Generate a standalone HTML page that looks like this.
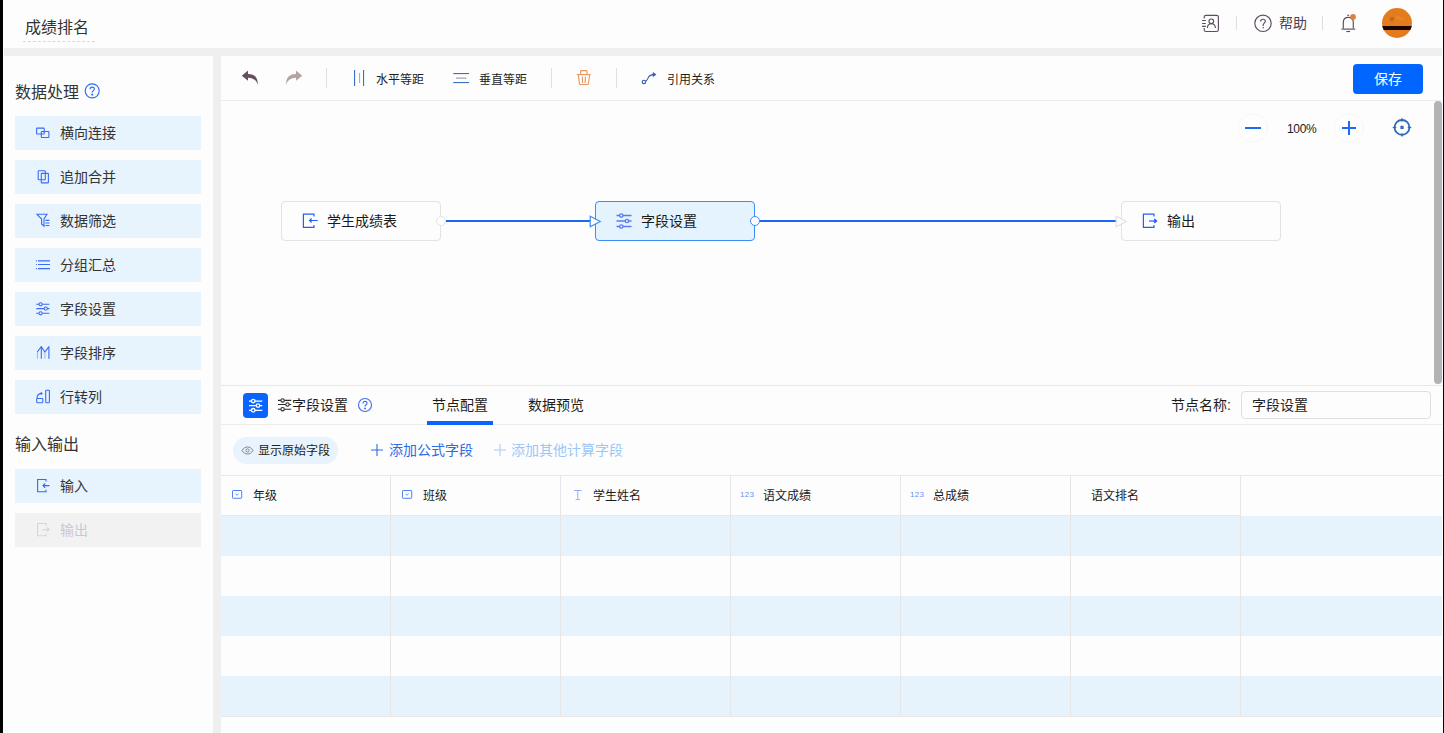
<!DOCTYPE html>
<html lang="zh-CN">
<head>
<meta charset="utf-8">
<style>
*{box-sizing:border-box;margin:0;padding:0}
html,body{width:1444px;height:733px;overflow:hidden;background:#fdfdfd;font-family:"Liberation Sans",sans-serif;color:#333}
.abs{position:absolute}
#lb{left:0;top:0;width:3px;height:733px;background:#000}
#rb{left:1443px;top:0;width:1px;height:733px;background:#000}
#lw{left:3px;top:0;width:1px;height:733px;background:#fff}
#rw{left:1442px;top:0;width:1px;height:733px;background:#fff}
#gray{left:4px;top:48px;width:1438px;height:685px;background:#efefef}
#title{left:25px;top:17px;font-size:16px;line-height:22px;color:#333}
#title-ul{left:23px;top:41px;width:72px;height:1px;border-top:1px dashed #d9d9d9}
.hsep{width:1px;height:14px;background:#ddd}
#left{left:4px;top:56px;width:209px;height:677px;background:#fdfdfd}
.sec{position:absolute;left:15px;font-size:16px;line-height:20px;color:#333;margin-top:2px}
.item{position:absolute;left:15px;width:186px;height:34px;background:#e7f3fd;font-size:14px;line-height:34px;color:#333}
.item .t{position:absolute;left:45px;top:0}
.item svg{position:absolute;left:21px;top:10px}
.item.dis{background:#f2f2f2;color:#c8c8d8}
#main{left:221px;top:56px;width:1221px;height:677px;background:#fdfdfd}
.tb{position:absolute;font-size:12px;line-height:16px;color:#1d1d1d}
.node-t{font-size:14px;line-height:18px;color:#1a1a1a}
.th{top:488px;font-size:12px;line-height:16px;color:#1a1a1a}
.num{top:490px;font-size:8px;line-height:10px;color:#6d8ef5;letter-spacing:0.3px}
.vsep{position:absolute;width:1px;height:20px;background:#e0e0e0}
</style>
</head>
<body>
<div id="lb" class="abs"></div>
<div id="rb" class="abs"></div>
<div id="lw" class="abs"></div>
<div id="rw" class="abs"></div>
<div id="gray" class="abs"></div>

<!-- header -->
<div id="title" class="abs">成绩排名</div>
<div id="title-ul" class="abs"></div>


<!-- header right -->
<svg class="abs" style="left:1198px;top:10px" width="26" height="26" viewBox="0 0 26 26" fill="none" stroke="#5b4d63" stroke-width="1.15">
<path d="M6.2 8.6V7.1C6.2 6.1 7 5.3 8 5.3H18.6C19.6 5.3 20.4 6.1 20.4 7.1V19.7C20.4 20.7 19.6 21.5 18.6 21.5H8C7 21.5 6.2 20.7 6.2 19.7V18"/>
<path d="M4.1 10.5H7.8M4.1 13.5H7.8M4.1 16.3H7.8"/>
<circle cx="13.3" cy="11.3" r="2.3"/>
<path d="M9.4 18C9.4 15.6 11.1 13.8 13.4 13.8 15.7 13.8 17.4 15.6 17.4 18"/>
</svg>
<div class="abs hsep" style="left:1236px;top:16px"></div>
<svg class="abs" style="left:1250px;top:10px" width="26" height="26" viewBox="0 0 26 26" fill="none" stroke="#5b4d63" stroke-width="1.15">
<circle cx="13" cy="13.3" r="8.2"/>
<path d="M10.6 11.4C10.6 9.9 11.6 9.2 13 9.2 14.4 9.2 15.3 10 15.3 11.2 15.3 12.7 13.2 13.1 13.2 15.3V15.9"/>
<path d="M12.6 17.6H13.9" stroke-width="1.3"/>
</svg>
<div class="abs" style="left:1279px;top:14px;font-size:14px;line-height:18px;color:#4b4052">帮助</div>
<div class="abs hsep" style="left:1322px;top:16px"></div>
<svg class="abs" style="left:1336px;top:10px" width="26" height="26" viewBox="0 0 26 26" fill="none" stroke="#5b4d63" stroke-width="1.15">
<path d="M7.3 18.6V12.4C7.3 9.3 9.3 7.3 12.3 7.3 15.3 7.3 17.3 9.3 17.3 12.4V18.6"/>
<path d="M5.4 19.1H19.2"/>
<path d="M11.3 5.3H13.1"/>
<path d="M10.4 21.5H14.1"/>
<circle cx="17" cy="6.9" r="2.9" fill="#d8843e" stroke="none"/>
</svg>
<svg class="abs" style="left:1382px;top:8px" width="30" height="30" viewBox="0 0 30 30">
<defs><clipPath id="av"><circle cx="15" cy="15" r="15"/></clipPath></defs>
<g clip-path="url(#av)">
<rect width="30" height="30" fill="#e47c1d"/>
<path d="M14 7.5c3 0.5 6 2.5 9 4.5-3 0.5-6 0-9-1.5z" fill="#ea8a33" opacity="0.8"/>
<path d="M8.8 9.2v4.3M11.1 9.2v4.3M8.8 9.6l1.15 2 1.15-2" stroke="#9a5a1f" stroke-width="0.7" fill="none"/>
<rect x="0" y="18" width="30" height="4" fill="#1a0505"/>
</g>
</svg>

<!-- left panel -->
<div id="left" class="abs"></div>
<div class="sec" style="top:81px">数据处理</div>
<div class="item" style="top:116px"><span class="t">横向连接</span></div>
<div class="item" style="top:160px"><span class="t">追加合并</span></div>
<div class="item" style="top:204px"><span class="t">数据筛选</span></div>
<div class="item" style="top:248px"><span class="t">分组汇总</span></div>
<div class="item" style="top:292px"><span class="t">字段设置</span></div>
<div class="item" style="top:336px"><span class="t">字段排序</span></div>
<div class="item" style="top:380px"><span class="t">行转列</span></div>
<div class="sec" style="top:433px">输入输出</div>
<div class="item" style="top:469px"><span class="t">输入</span></div>
<div class="item dis" style="top:513px"><span class="t">输出</span></div>


<!-- left icons -->
<svg class="abs" style="left:83px;top:82px" width="18" height="18" viewBox="0 0 18 18" fill="none" stroke="#2a6cf5" stroke-width="1.1">
<circle cx="9.2" cy="8.9" r="7"/>
<path d="M7 7.2c0-1.3 0.9-2.1 2.2-2.1s2.2 0.8 2.2 2c0 1.6-2.2 1.6-2.2 3.4"/>
<circle cx="9.2" cy="12.6" r="0.5" fill="#2a6cf5"/>
</svg>
<svg class="abs ic" style="left:34px;top:125px" width="18" height="16" viewBox="0 0 18 16" fill="none" stroke="#3a6cf5" stroke-width="1.1">
<rect x="2.6" y="3.1" width="7.6" height="5.9" rx="0.5"/>
<rect x="7.3" y="6.5" width="7.6" height="6" rx="0.5"/>
</svg>
<svg class="abs ic" style="left:34px;top:168px" width="18" height="18" viewBox="0 0 18 18" fill="none" stroke="#3a6cf5" stroke-width="1.1">
<rect x="4.2" y="2.7" width="7.1" height="9" rx="0.5"/>
<rect x="7.3" y="5.4" width="7.1" height="9.5" rx="0.5"/>
</svg>
<svg class="abs ic" style="left:34px;top:212px" width="18" height="17" viewBox="0 0 18 17" fill="none" stroke="#3a6cf5" stroke-width="1.1">
<path d="M3 2.3h10l-3 4.6v7.3l-2.4-2.3V7z"/>
<path d="M11.4 8.4h4M11.4 11h4M11.4 13.5h4"/>
</svg>
<svg class="abs ic" style="left:34px;top:256px" width="18" height="17" viewBox="0 0 18 17" fill="none" stroke="#3a6cf5" stroke-width="1.1">
<path d="M4 4.9h12M4 8.5h12M4 12.6h12"/>
<path d="M2 4.9h0.9M2 8.5h0.9M2 12.6h0.9"/>
</svg>
<svg class="abs ic" style="left:34px;top:300px" width="18" height="17" viewBox="0 0 18 17" fill="none" stroke="#3a6cf5" stroke-width="1.1">
<path d="M2.3 4.3h2.6M8.3 4.3h7.1M2.3 8.6h7.8M13.5 8.6h1.9M2.3 13.3h2.6M8.3 13.3h7.1"/>
<circle cx="6.6" cy="4.3" r="1.6"/><circle cx="11.8" cy="8.6" r="1.6"/><circle cx="6.6" cy="13.3" r="1.6"/>
</svg>
<svg class="abs ic" style="left:34px;top:343px" width="18" height="17" viewBox="0 0 18 17" fill="none" stroke="#3a6cf5" stroke-width="1.1">
<path d="M3.2 9l4.1-5.4L10.9 9l4-5.4"/>
<path d="M7.3 3.6v12.2M14.9 3.6v12.2"/>
<path d="M3.5 9v6.8M10.9 9v6.8" stroke="#a3b8f5"/>
</svg>
<svg class="abs ic" style="left:34px;top:388px" width="18" height="17" viewBox="0 0 18 17" fill="none" stroke="#3a6cf5" stroke-width="1.1">
<rect x="2.7" y="10.5" width="6.1" height="4.2" rx="0.6"/>
<path d="M3 10.2c0-3 1.8-4.6 4.6-4.8"/>
<path d="M6.8 4.3l1.3 1.1-1.3 1.1"/>
<rect x="11.7" y="2.3" width="3.7" height="12.4" rx="0.6"/>
</svg>
<svg class="abs ic" style="left:34px;top:477px" width="18" height="17" viewBox="0 0 18 17" fill="none" stroke="#2f6cf2" stroke-width="1.1">
<path d="M12 4.5V2.5H3.6v12.3H12v-2"/>
<path d="M15.5 8.6H9M11.2 6.4L9 8.6l2.2 2.2"/>
</svg>
<svg class="abs ic" style="left:34px;top:521px" width="18" height="17" viewBox="0 0 18 17" fill="none" stroke="#d3d3ea" stroke-width="1.1">
<path d="M12 4.5V2.5H3.6v12.3H12v-2"/>
<path d="M8.6 8.6h6.5M12.9 6.4l2.2 2.2-2.2 2.2"/>
</svg>

<!-- main panel -->
<div id="main" class="abs"></div>

<!-- toolbar -->
<div class="abs" style="left:221px;top:100px;width:1221px;height:1px;background:#ebebeb"></div>
<svg class="abs" style="left:240px;top:68px" width="20" height="20" viewBox="0 0 20 20">
<path d="M1.8 7.7L8 2.6V5.9C14 5.9 18.2 9 17.8 17 16.8 12.6 13.4 9.7 8 9.7V12.8Z" fill="#654e60"/>
</svg>
<svg class="abs" style="left:284px;top:68px" width="20" height="20" viewBox="0 0 20 20">
<path d="M18.2 7.7L12 2.6V5.9C6 5.9 1.8 9 2.2 17 3.2 12.6 6.6 9.7 12 9.7V12.8Z" fill="#b3a49f"/>
</svg>
<div class="vsep" style="left:326px;top:68px"></div>
<svg class="abs" style="left:352px;top:69px" width="14" height="18" viewBox="0 0 14 18">
<rect x="2" y="1" width="1.1" height="16" fill="#3a6fc0"/>
<rect x="7" y="4" width="1.1" height="10" fill="#a6aec4"/>
<rect x="11" y="1" width="1.1" height="16" fill="#3a6fc0"/>
</svg>
<div class="tb" style="left:376px;top:72px">水平等距</div>
<svg class="abs" style="left:452px;top:71px" width="18" height="14" viewBox="0 0 18 14">
<rect x="1.2" y="2" width="15.8" height="1.1" fill="#3a6fc0"/>
<rect x="4" y="6.5" width="10.4" height="1.3" fill="#a6a6b6"/>
<rect x="1.2" y="11" width="15.8" height="1.1" fill="#3a6fc0"/>
</svg>
<div class="tb" style="left:479px;top:72px">垂直等距</div>
<div class="vsep" style="left:551px;top:68px"></div>
<svg class="abs" style="left:570px;top:64px" width="28" height="28" viewBox="0 0 28 28" fill="none" stroke="#e8955c" stroke-width="1.1">
<path d="M6.9 10.6H20.8"/>
<path d="M10.6 10.4V7.3C10.6 6.9 10.9 6.6 11.3 6.6H16.3C16.7 6.6 17 6.9 17 7.3V10.4"/>
<path d="M8.3 10.7L9.5 19.8C9.6 20.2 9.9 20.5 10.3 20.5H17.6C18 20.5 18.3 20.2 18.4 19.8L19.6 10.7"/>
<path d="M12.3 12.6L12.6 19M15.5 12.6L15.2 19"/>
</svg>
<div class="vsep" style="left:616px;top:68px"></div>
<svg class="abs" style="left:636px;top:66px" width="26" height="24" viewBox="0 0 26 24" fill="none" stroke="#2f5cae" stroke-width="1.1">
<circle cx="7.9" cy="15.9" r="1.7"/>
<path d="M9.5 15.2C11.6 14.6 11.8 11.6 13.4 10 14.4 9 15.6 8.7 17.2 8.6"/>
<path d="M17 6.6l3.1 2-3.1 2z" fill="#2f5cae" stroke-width="0.6"/>
</svg>
<div class="tb" style="left:667px;top:72px">引用关系</div>
<div class="abs" style="left:1353px;top:64px;width:70px;height:30px;background:#0066ff;border-radius:4px;color:#fff;font-size:14px;line-height:30px;text-align:center">保存</div>

<!-- canvas controls -->
<div class="abs" style="left:1238px;top:113px;width:30px;height:30px;border:1px solid #f7f7f7;border-radius:50%"></div>
<div class="abs" style="left:1245px;top:127px;width:16px;height:2px;background:#1f6af5"></div>
<div class="abs" style="left:1287px;top:121px;font-size:12px;line-height:16px;color:#1a1a1a;letter-spacing:-0.3px">100%</div>
<div class="abs" style="left:1334px;top:113px;width:30px;height:30px;border:1px solid #f7f7f7;border-radius:50%"></div>
<div class="abs" style="left:1342px;top:127px;width:14px;height:2px;background:#1f6af5"></div>
<div class="abs" style="left:1348px;top:121px;width:2px;height:14px;background:#1f6af5"></div>
<svg class="abs" style="left:1391px;top:116px" width="22" height="22" viewBox="0 0 22 22" fill="none" stroke="#2f6bbd" stroke-width="1.8">
<circle cx="11" cy="11.4" r="7.4"/>
<rect x="9.4" y="9.8" width="3.2" height="3.2" fill="#2f6bbd" stroke="none"/>
<path d="M11 1.6L12.3 4.2 11 6 9.7 4.2z M11 21.2L12.3 18.6 11 16.8 9.7 18.6z M1.2 11.4L3.8 10.1 5.6 11.4 3.8 12.7z M20.8 11.4L18.2 10.1 16.4 11.4 18.2 12.7z" fill="#2f6bbd" stroke="none"/>
</svg>
<div class="abs" style="left:1434px;top:101px;width:8px;height:283px;background:#b4b2b4;border-radius:4px"></div>

<!-- nodes -->
<div class="abs" style="left:446px;top:220px;width:146px;height:2px;background:#1b66f5"></div>
<div class="abs" style="left:759px;top:220px;width:358px;height:2px;background:#1b66f5"></div>
<div class="abs" style="left:281px;top:201px;width:160px;height:40px;border:1px solid #e3e3e3;border-radius:4px;background:#fdfdfd"></div>
<svg class="abs" style="left:298px;top:209px" width="24" height="24" viewBox="0 0 24 24" fill="none" stroke="#1f60fa" stroke-width="1.2">
<path d="M16 7.6V5.2H5.4v13.2H16v-2.4"/>
<path d="M19.8 11.5H11.6M13.6 9.5l-2 2 2 2"/>
</svg>
<div class="abs node-t" style="left:327px;top:212px">学生成绩表</div>
<div class="abs" style="left:436px;top:216px;width:10px;height:10px;border:1px solid #e3e3e3;border-radius:50%;background:#fff"></div>

<div class="abs" style="left:595px;top:201px;width:160px;height:40px;border:1px solid #3a8ef5;border-radius:4px;background:#e4f3fd"></div>
<svg class="abs" style="left:589px;top:215px" width="13" height="13" viewBox="0 0 13 13">
<path d="M1.2 1.2L11.2 6.5 1.2 11.8z" fill="#fff" stroke="#3a8ef5" stroke-width="1.2"/>
</svg>
<svg class="abs" style="left:615px;top:212px" width="18" height="18" viewBox="0 0 18 18" fill="none" stroke="#5a7cf0" stroke-width="1.3">
<path d="M1.5 3.5h3M8 3.5h8.5M1.5 9h8.8M13.7 9h2.8M1.5 14.5h3M8 14.5h8.5"/>
<circle cx="6.3" cy="3.5" r="1.7"/><circle cx="12" cy="9" r="1.7"/><circle cx="6.3" cy="14.5" r="1.7"/>
</svg>
<div class="abs node-t" style="left:641px;top:212px">字段设置</div>
<div class="abs" style="left:750px;top:216px;width:10px;height:10px;border:1px solid #3a8ef5;border-radius:50%;background:#fff"></div>

<div class="abs" style="left:1121px;top:201px;width:160px;height:40px;border:1px solid #e3e3e3;border-radius:4px;background:#fdfdfd"></div>
<svg class="abs" style="left:1115px;top:215px" width="13" height="13" viewBox="0 0 13 13">
<path d="M1.2 1.2L11.2 6.5 1.2 11.8z" fill="#fff" stroke="#e0e0e0" stroke-width="1.2"/>
</svg>
<svg class="abs" style="left:1138px;top:209px" width="24" height="24" viewBox="0 0 24 24" fill="none" stroke="#1f60fa" stroke-width="1.2">
<path d="M16 7.6V5.2H5.4v13.2H16v-2.4"/>
<path d="M11 12H17.5"/>
<path d="M16.6 9.9l2.6 2.1-2.6 2.1z" fill="#1f60fa" stroke-width="0.8"/>
</svg>
<div class="abs node-t" style="left:1167px;top:212px">输出</div>



<!-- bottom panel -->
<div class="abs" style="left:221px;top:385px;width:1221px;height:1px;background:#e8e8e8"></div>
<div class="abs" style="left:221px;top:424px;width:1221px;height:1px;background:#ebebeb"></div>
<div class="abs" style="left:243px;top:393px;width:25px;height:25px;background:#0a64ff;border-radius:4px"></div>
<svg class="abs" style="left:246px;top:396px" width="19" height="19" viewBox="0 0 19 19" fill="none" stroke="#fff" stroke-width="1.3">
<path d="M3 5.1h2.4M9 5.1h7.3M3 9.6h7.2M13.8 9.6h2.5M3 14.3h2.4M9 14.3h7.3"/>
<circle cx="7.2" cy="5.1" r="1.8"/><circle cx="12" cy="9.6" r="1.8"/><circle cx="7.2" cy="14.3" r="1.8"/>
</svg>
<svg class="abs" style="left:277px;top:396px" width="16" height="16" viewBox="0 0 16 16" fill="none" stroke="#2a2a2a" stroke-width="1.1">
<path d="M1 4.4h2.8M7.4 4.4h6.8M1 8.5h7.7M12.3 8.5h1.9M1 13.2h2.8M7.4 13.2h6.8"/>
<circle cx="5.6" cy="4.4" r="1.7"/><circle cx="10.5" cy="8.5" r="1.7"/><circle cx="5.6" cy="13.2" r="1.7"/>
</svg>
<div class="abs" style="left:292px;top:396px;font-size:14px;line-height:18px;color:#1d1d1d">字段设置</div>
<svg class="abs" style="left:357px;top:397px" width="16" height="16" viewBox="0 0 16 16" fill="none" stroke="#3d6ff2" stroke-width="1.1">
<circle cx="8" cy="8" r="6.5"/>
<path d="M6 6.4c0-1.2 0.9-2 2-2s2 0.8 2 1.9c0 1.5-2 1.5-2 3.1"/>
<circle cx="8" cy="11.4" r="0.4" fill="#3d6ff2"/>
</svg>
<div class="abs" style="left:432px;top:396px;font-size:14px;line-height:18px;color:#1d1d1d">节点配置</div>
<div class="abs" style="left:427px;top:421px;width:66px;height:4px;background:#0a64ff"></div>
<div class="abs" style="left:528px;top:396px;font-size:14px;line-height:18px;color:#1d1d1d">数据预览</div>
<div class="abs" style="left:1171px;top:396px;font-size:14px;line-height:18px;color:#1d1d1d">节点名称:</div>
<div class="abs" style="left:1241px;top:391px;width:190px;height:28px;border:1px solid #dedede;border-radius:4px;background:#fdfdfd"></div>
<div class="abs" style="left:1252px;top:396px;font-size:14px;line-height:18px;color:#222">字段设置</div>

<div class="abs" style="left:233px;top:437px;width:105px;height:27px;background:#e8f3fd;border-radius:13.5px"></div>
<svg class="abs" style="left:241px;top:444px" width="13" height="13" viewBox="0 0 13 13" fill="none" stroke="#7f8790" stroke-width="1">
<path d="M1 6.5C2.4 4.2 4.3 3 6.5 3s4.1 1.2 5.5 3.5C10.6 8.8 8.7 10 6.5 10S2.4 8.8 1 6.5z"/>
<circle cx="6.5" cy="6.5" r="1.6"/>
</svg>
<div class="abs" style="left:258px;top:443px;font-size:12px;line-height:16px;color:#222">显示原始字段</div>
<svg class="abs" style="left:370px;top:443px" width="14" height="14" viewBox="0 0 14 14" stroke="#2c6ce6" stroke-width="1.1"><path d="M7 1v12M1 7h12"/></svg>
<div class="abs" style="left:389px;top:441px;font-size:14px;line-height:18px;color:#2c6ce6">添加公式字段</div>
<svg class="abs" style="left:493px;top:443px" width="14" height="14" viewBox="0 0 14 14" stroke="#a9cff5" stroke-width="1.1"><path d="M7 1v12M1 7h12"/></svg>
<div class="abs" style="left:511px;top:441px;font-size:14px;line-height:18px;color:#9bc7f6">添加其他计算字段</div>

<!-- table -->
<div class="abs" style="left:221px;top:475px;width:1221px;height:1px;background:#e8e8e8"></div>
<div class="abs" style="left:221px;top:515px;width:1020px;height:1px;background:#e8e8e8"></div>
<div class="abs" style="left:221px;top:516px;width:1221px;height:40px;background:#e6f3fc"></div>
<div class="abs" style="left:221px;top:596px;width:1221px;height:40px;background:#e6f3fc"></div>
<div class="abs" style="left:221px;top:676px;width:1221px;height:40px;background:#e6f3fc"></div>
<div class="abs" style="left:221px;top:716px;width:1221px;height:1px;background:#e8e8e8"></div>
<div class="abs" style="left:390px;top:476px;width:1px;height:240px;background:#e6e6e6"></div>
<div class="abs" style="left:560px;top:476px;width:1px;height:240px;background:#e6e6e6"></div>
<div class="abs" style="left:730px;top:476px;width:1px;height:240px;background:#e6e6e6"></div>
<div class="abs" style="left:900px;top:476px;width:1px;height:240px;background:#e6e6e6"></div>
<div class="abs" style="left:1070px;top:476px;width:1px;height:240px;background:#e6e6e6"></div>
<div class="abs" style="left:1240px;top:476px;width:1px;height:240px;background:#e6e6e6"></div>

<svg class="abs" style="left:231px;top:489px" width="12" height="11" viewBox="0 0 12 11" fill="none" stroke="#4f82f6" stroke-width="1"><rect x="1.5" y="1.5" width="9.2" height="7.8" rx="0.6"/><path d="M4.6 4.8l1.5 1.4 1.5-1.4" stroke-width="0.9"/></svg>
<div class="abs th" style="left:253px">年级</div>
<svg class="abs" style="left:401px;top:489px" width="12" height="11" viewBox="0 0 12 11" fill="none" stroke="#4f82f6" stroke-width="1"><rect x="1.5" y="1.5" width="9.2" height="7.8" rx="0.6"/><path d="M4.6 4.8l1.5 1.4 1.5-1.4" stroke-width="0.9"/></svg>
<div class="abs th" style="left:423px">班级</div>
<svg class="abs" style="left:573px;top:489px" width="10" height="12" viewBox="0 0 10 12" fill="none" stroke="#8fb4f5" stroke-width="1"><path d="M1 1.5h7.6M4.8 1.5v9M2.6 10.6h4.4" /></svg>
<div class="abs th" style="left:593px">学生姓名</div>
<div class="abs num" style="left:740px">123</div>
<div class="abs th" style="left:763px">语文成绩</div>
<div class="abs num" style="left:910px">123</div>
<div class="abs th" style="left:933px">总成绩</div>
<div class="abs th" style="left:1091px">语文排名</div>

</body>
</html>
